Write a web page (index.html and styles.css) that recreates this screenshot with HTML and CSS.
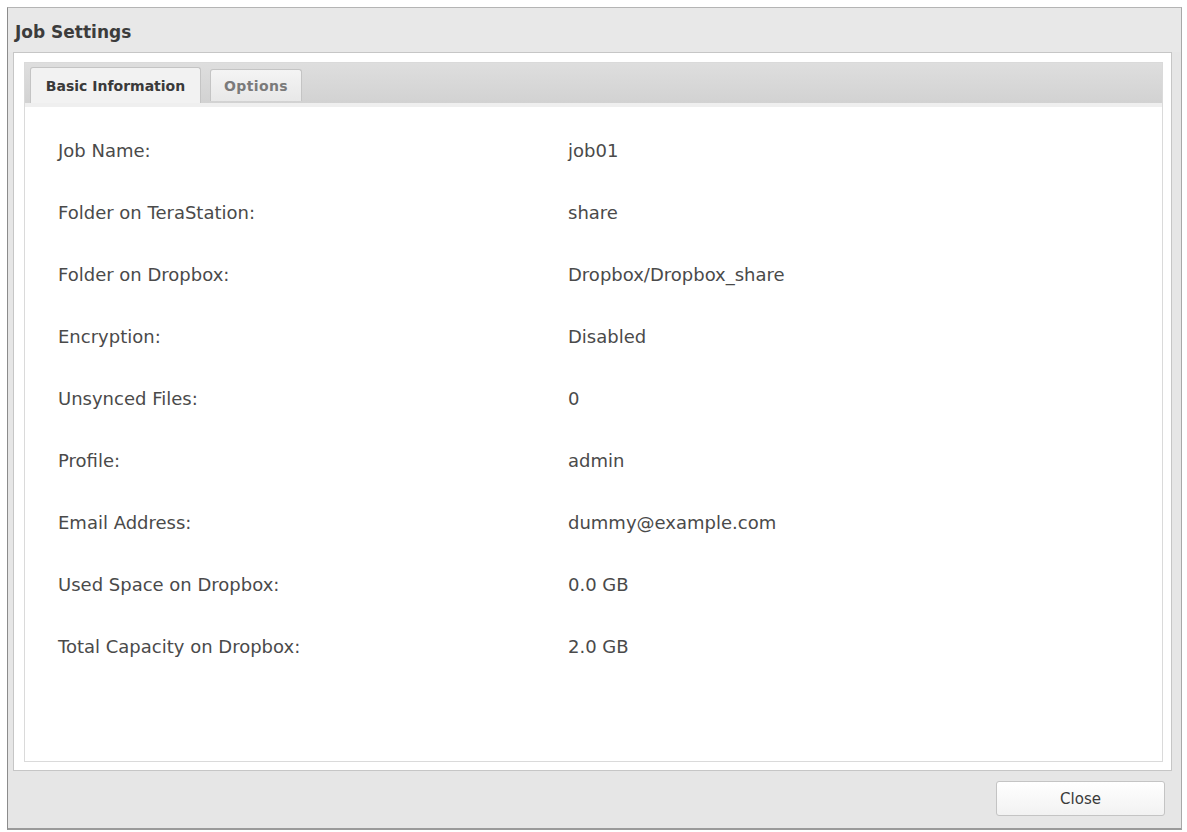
FILE: index.html
```html
<!DOCTYPE html>
<html lang="en">
<head>
  <meta charset="UTF-8">
  <title>Job Settings</title>
  <link rel="stylesheet" href="styles.css">
</head>
<body>
  <div class="window">
    <div class="title">Job Settings</div>
    <div class="panel">
      <div class="inner">
        <div class="tabs">
          <div class="tab active">Basic Information</div>
          <div class="tab">Options</div>
        </div>
        <div class="info">
          <div class="row"><span class="label">Job Name:</span><span class="value">job01</span></div>
          <div class="row"><span class="label">Folder on TeraStation:</span><span class="value">share</span></div>
          <div class="row"><span class="label">Folder on Dropbox:</span><span class="value">Dropbox/Dropbox_share</span></div>
          <div class="row"><span class="label">Encryption:</span><span class="value">Disabled</span></div>
          <div class="row"><span class="label">Unsynced Files:</span><span class="value">0</span></div>
          <div class="row"><span class="label">Profile:</span><span class="value">admin</span></div>
          <div class="row"><span class="label">Email Address:</span><span class="value">dummy@example.com</span></div>
          <div class="row"><span class="label">Used Space on Dropbox:</span><span class="value">0.0 GB</span></div>
          <div class="row"><span class="label">Total Capacity on Dropbox:</span><span class="value">2.0 GB</span></div>
        </div>
      </div>
    </div>
    <div class="footer">
      <button class="close">Close</button>
    </div>
  </div>
</body>
</html>
```

FILE: styles.css
```css
body {
  margin: 0;
  background-color: #fff;
  font-family: "DejaVu Sans", Verdana, sans-serif;
}

.window {
  box-sizing: border-box;
  margin: 7px 0 0 7px;
  width: 1175px;
  height: 823px;
  background-color: #e6e6e6;
  border-top: 1px solid #b4b4b4;
  border-left: 1px solid #8c8c8c;
  border-right: 1px solid #a8a8a8;
  border-bottom: 2px solid #9a9a9a;
  display: flex;
  flex-direction: column;
}

.title {
  height: 44px;
  box-sizing: border-box;
  padding: 14px 0 0 7px;
  font-size: 17px;
  font-weight: bold;
  color: #3c3c3c;
  background-color: #e8e8e8;
}

.panel {
  margin: 0 9px 0 5px;
  padding: 9px 8px 8px 10px;
  background-color: #fff;
  border: 1px solid #c6c6c6;
  height: 719px;
  box-sizing: border-box;
}

.inner {
  height: 100%;
  box-sizing: border-box;
  border: 1px solid #dadada;
  display: flex;
  flex-direction: column;
}

.tabs {
  height: 44px;
  flex-shrink: 0;
  box-sizing: border-box;
  display: flex;
  align-items: flex-end;
  gap: 9px;
  padding-left: 5px;
  background: linear-gradient(#dedede, #d2d2d2);
  border-bottom: 4px solid #efefef;
}

.tab {
  box-sizing: border-box;
  height: 32px;
  width: 92px;
  margin-bottom: 2px;
  display: flex;
  align-items: center;
  justify-content: center;
  white-space: nowrap;
  font-size: 14px;
  font-weight: bold;
  color: #7a7a7a;
  letter-spacing: 0.4px;
  background: linear-gradient(#f4f4f4, #e8e8e8);
  border: 1px solid #c4c4c4;
  border-bottom: none;
  border-radius: 3px 3px 0 0;
}

.tab.active {
  height: 36px;
  width: 171px;
  margin-bottom: 0;
  color: #3a3a3a;
  letter-spacing: 0;
  background: #f2f2f2;
}

.info {
  padding: 12px 0 0 33px;
}

.row {
  height: 62px;
  display: flex;
  align-items: center;
  font-size: 18px;
  color: #4a4a4a;
}

.label {
  width: 510px;
}

.footer {
  flex: 1;
  display: flex;
  justify-content: flex-end;
  align-items: flex-start;
  padding: 10px 16px 0 0;
}

.close {
  width: 169px;
  height: 35px;
  font-family: "DejaVu Sans", Verdana, sans-serif;
  font-size: 15px;
  color: #3a3a3a;
  background: linear-gradient(#ffffff, #f2f2f2);
  border: 1px solid #c4c4c4;
  border-radius: 3px;
  cursor: pointer;
}
```
